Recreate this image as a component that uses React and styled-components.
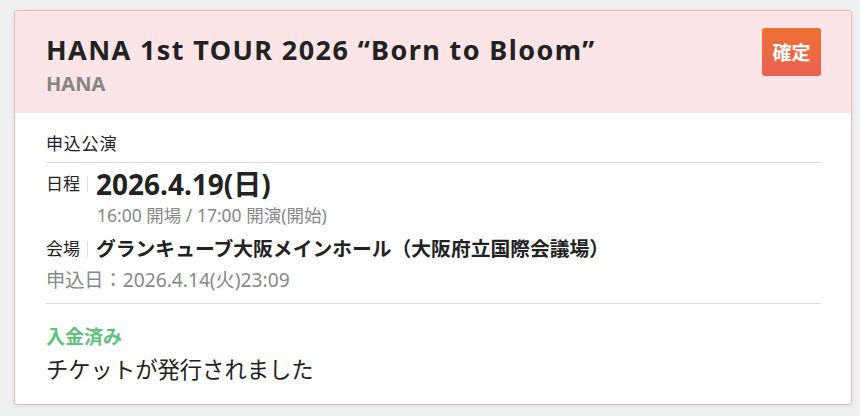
import React from 'react'
import styled, { createGlobalStyle } from 'styled-components'

const GlobalStyle = createGlobalStyle`
  * { margin: 0; padding: 0; box-sizing: border-box; }
  body {
    background: #eef0f1;
    font-family: "Noto Sans", "Noto Sans CJK JP", sans-serif;
    color: #222;
  }
`

const Page = styled.div`
  padding: 10px 8px 12px 14px;
`

const Card = styled.div`
  background: #fff;
  border: 1px solid #e9b9bd;
  border-radius: 3px;
  box-shadow: 0 1px 4px rgba(0, 0, 0, 0.08);
  overflow: hidden;
`

const Header = styled.div`
  background: #fce5e7;
  height: 102px;
  padding: 0 30px 0 31px;
  display: flex;
  justify-content: space-between;
  align-items: flex-start;
`

const TitleBlock = styled.div`
  padding-top: 21px;
`

const Title = styled.h1`
  font-size: 27px;
  font-weight: 700;
  line-height: 36px;
  letter-spacing: 1.4px;
  color: #222;
`

const Artist = styled.div`
  font-size: 20px;
  font-weight: 700;
  color: #858585;
  line-height: 26px;
  margin-top: 3px;
`

const Badge = styled.div`
  width: 59px;
  height: 48px;
  margin-top: 17px;
  border-radius: 3px;
  background: linear-gradient(#ef7031, #eb6153);
  color: #fff;
  font-weight: 700;
  font-size: 19px;
  display: flex;
  align-items: center;
  justify-content: center;
`

const Body = styled.div`
  padding: 19px 30px 19px 31px;
`

const Section = styled.div`
  font-size: 17px;
  letter-spacing: 0.8px;
  line-height: 24px;
  color: #222;
  padding-bottom: 6px;
  border-bottom: 1px solid #dcdcdc;
`

const Row = styled.div`
  display: flex;
  align-items: center;
  margin-top: ${p => p.$gap}px;
`

const Label = styled.span`
  font-size: 17px;
  line-height: 16px;
  color: #222;
  padding-right: 7px;
  margin-right: 8px;
  border-right: 1px solid #dedede;
`

const DateText = styled.span`
  font-size: 28px;
  font-weight: 700;
  line-height: 32px;
`

const Sub = styled.div`
  font-size: ${p => p.$size}px;
  line-height: 22px;
  color: #888;
  padding-left: ${p => p.$indent || 0}px;
  margin-top: ${p => p.$gap || 0}px;
`

const Venue = styled.span`
  font-size: 19.8px;
  font-weight: 700;
  line-height: 28px;
`

const Divider = styled.div`
  border-top: 1px solid #dcdcdc;
  margin-top: 12px;
`

const Paid = styled.div`
  font-size: 19px;
  font-weight: 700;
  color: #5ec27b;
  line-height: 26px;
  margin-top: 20px;
`

const Message = styled.div`
  font-size: 22.3px;
  line-height: 30px;
  margin-top: 5px;
  color: #222;
`

export default function App() {
  return (
    <Page>
      <GlobalStyle />
      <Card>
        <Header>
          <TitleBlock>
            <Title>HANA 1st TOUR 2026 “Born to Bloom”</Title>
            <Artist>HANA</Artist>
          </TitleBlock>
          <Badge>確定</Badge>
        </Header>
        <Body>
          <Section>申込公演</Section>
          <Row $gap={5}>
            <Label>日程</Label>
            <DateText>2026.4.19(日)</DateText>
          </Row>
          <Sub $size={17.5} $indent={51} $gap={4}>16:00 開場 / 17:00 開演(開始)</Sub>
          <Row $gap={9}>
            <Label>会場</Label>
            <Venue>グランキューブ大阪メインホール（大阪府立国際会議場）</Venue>
          </Row>
          <Sub $size={19.2} $gap={6}>申込日：2026.4.14(火)23:09</Sub>
          <Divider />
          <Paid>入金済み</Paid>
          <Message>チケットが発行されました</Message>
        </Body>
      </Card>
    </Page>
  )
}
